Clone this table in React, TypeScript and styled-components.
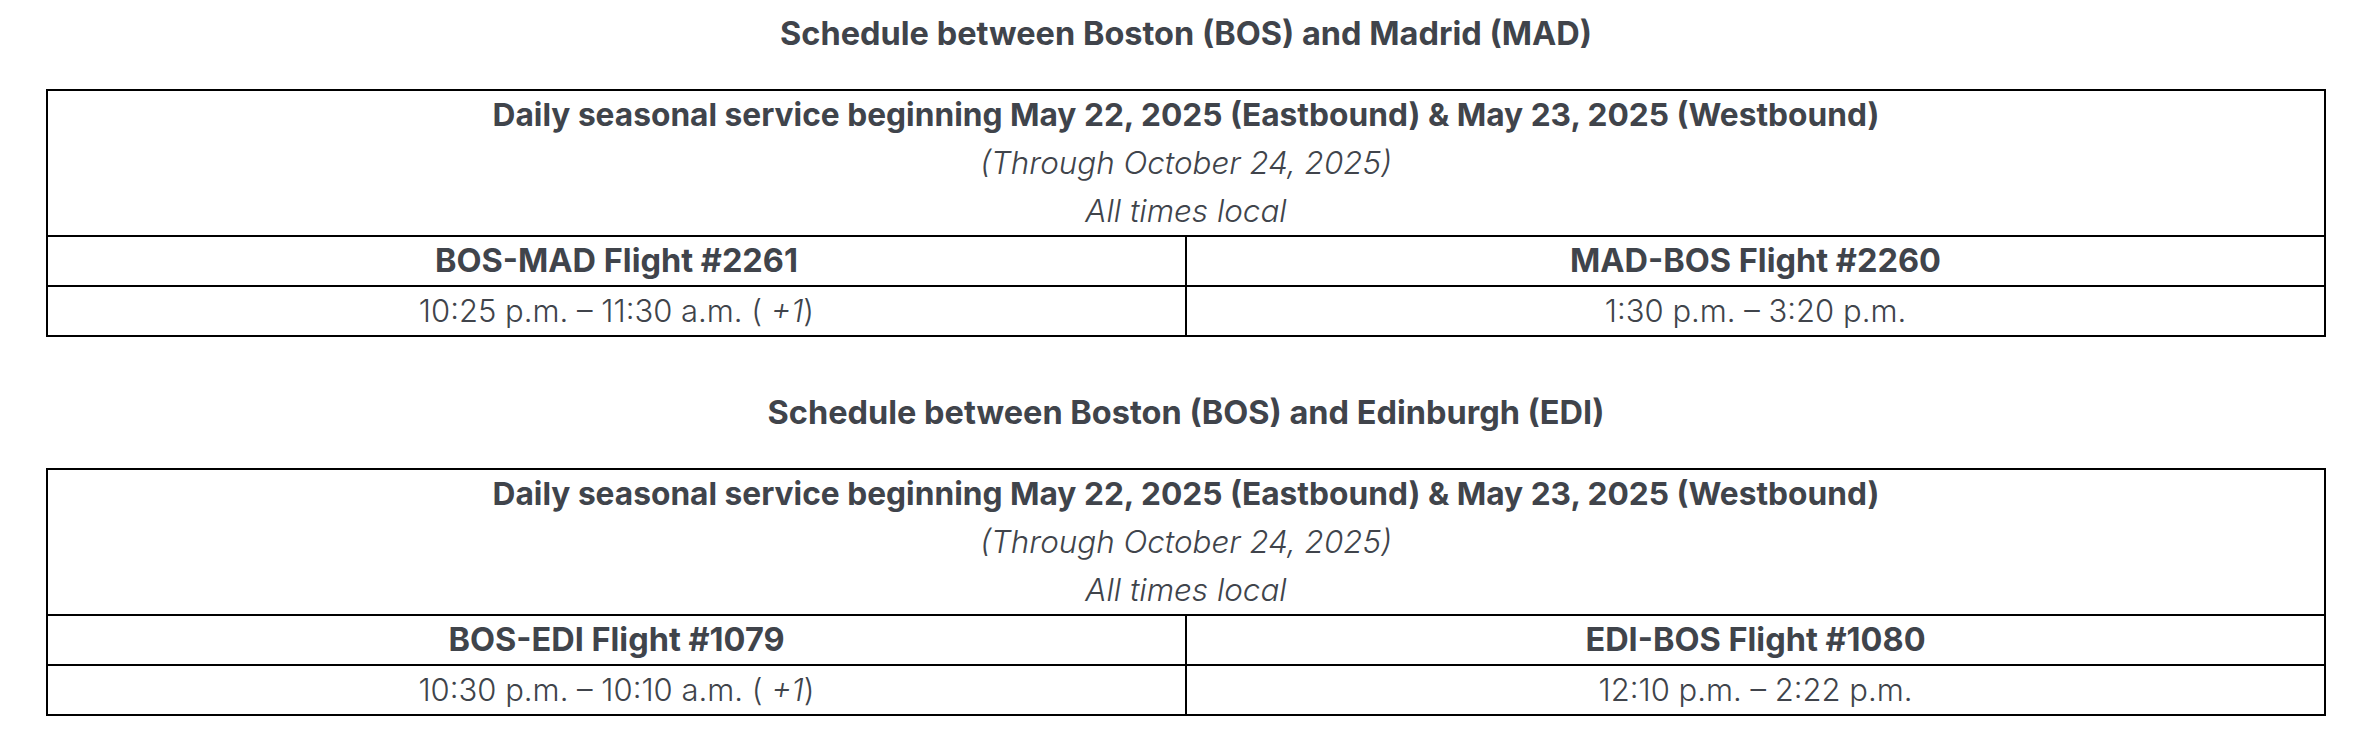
import React from "react";
import styled, { createGlobalStyle } from "styled-components";

const GlobalStyle = createGlobalStyle`
  body {
    margin: 0;
    background: #ffffff;
    font-family: Inter, Roboto, "Liberation Sans", sans-serif;
    color: #40444b;
  }
`;

const Page = styled.div`
  padding: 10px 34px 0 46px;
`;

const Section = styled.section`
  margin-bottom: 52px;
`;

const Title = styled.h2`
  margin: 0 0 31px;
  font-size: 32.5px;
  line-height: 48px;
  font-weight: 700;
  text-align: center;
`;

const Table = styled.table`
  width: 100%;
  border-collapse: collapse;
  table-layout: fixed;
  border: 2px solid #000;
`;

const Cell = styled.td<{ $bold?: boolean }>`
  border: 2px solid #000;
  padding: 0;
  text-align: center;
  font-size: ${(p) => (p.$bold ? "32.5px" : "31px")};
  line-height: 48px;
  font-weight: ${(p) => (p.$bold ? 700 : 300)};
`;

const Line = styled.div<{ $italic?: boolean; $bold?: boolean }>`
  font-style: ${(p) => (p.$italic ? "italic" : "normal")};
  font-weight: ${(p) => (p.$bold ? 700 : 300)};
  font-size: ${(p) => (p.$bold ? "31.7px" : "31.4px")};
`;

interface Schedule {
  title: string;
  out: { label: string; times: string; nextDay?: boolean };
  back: { label: string; times: string; nextDay?: boolean };
}

const schedules: Schedule[] = [
  {
    title: "Schedule between Boston (BOS) and Madrid (MAD)",
    out: { label: "BOS-MAD Flight #2261", times: "10:25 p.m. – 11:30 a.m.", nextDay: true },
    back: { label: "MAD-BOS Flight #2260", times: "1:30 p.m. – 3:20 p.m." },
  },
  {
    title: "Schedule between Boston (BOS) and Edinburgh (EDI)",
    out: { label: "BOS-EDI Flight #1079", times: "10:30 p.m. – 10:10 a.m.", nextDay: true },
    back: { label: "EDI-BOS Flight #1080", times: "12:10 p.m. – 2:22 p.m." },
  },
];

const Times = ({ times, nextDay }: { times: string; nextDay?: boolean }) => (
  <>
    {times}
    {nextDay && (
      <>
        {" ( "}
        <em>+1</em>)
      </>
    )}
  </>
);

const ScheduleTable = ({ schedule }: { schedule: Schedule }) => (
  <Section>
    <Title>{schedule.title}</Title>
    <Table>
      <tbody>
        <tr>
          <Cell colSpan={2}>
            <Line $bold>
              Daily seasonal service beginning May 22, 2025 (Eastbound) &amp; May 23, 2025 (Westbound)
            </Line>
            <Line $italic>(Through October 24, 2025)</Line>
            <Line $italic>All times local</Line>
          </Cell>
        </tr>
        <tr>
          <Cell $bold>{schedule.out.label}</Cell>
          <Cell $bold>{schedule.back.label}</Cell>
        </tr>
        <tr>
          <Cell>
            <Times times={schedule.out.times} nextDay={schedule.out.nextDay} />
          </Cell>
          <Cell>
            <Times times={schedule.back.times} nextDay={schedule.back.nextDay} />
          </Cell>
        </tr>
      </tbody>
    </Table>
  </Section>
);

const App = () => (
  <>
    <GlobalStyle />
    <Page>
      {schedules.map((s) => (
        <ScheduleTable key={s.title} schedule={s} />
      ))}
    </Page>
  </>
);

export default App;
